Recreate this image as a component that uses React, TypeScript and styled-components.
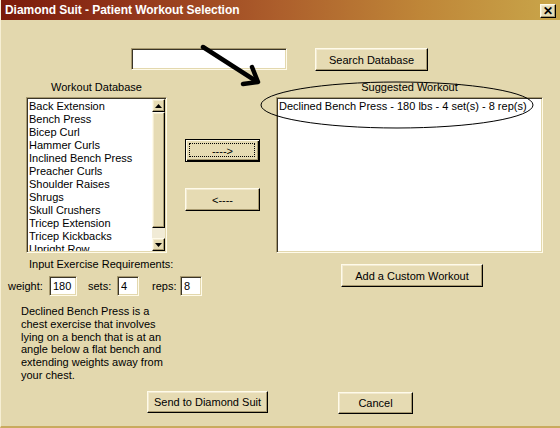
import React from "react";
import styled, { createGlobalStyle, css } from "styled-components";

const Global = createGlobalStyle`
  html, body { margin: 0; padding: 0; background: #e3d8ae; }
  body { font-family: "Liberation Sans", Arial, sans-serif; font-size: 11px; color: #000; }
  * { box-sizing: border-box; }
`;

const raised = css`
  border-top: 1px solid #fffbea;
  border-left: 1px solid #fffbea;
  border-right: 1px solid #000;
  border-bottom: 1px solid #000;
  box-shadow: inset -1px -1px 0 #a89a70, inset 1px 1px 0 #f2ead0;
`;

const sunken = css`
  border-top: 1px solid #a89a70;
  border-left: 1px solid #a89a70;
  border-right: 1px solid #fffbea;
  border-bottom: 1px solid #fffbea;
  box-shadow: inset 1px 1px 0 #3a3528, inset -1px -1px 0 #e3d8ae;
`;

const Window = styled.div`
  position: relative;
  width: 560px;
  height: 428px;
  display: flex;
  flex-direction: column;
  background: #e3d8ae;
  border-left: 1px solid #f6efd4;
  border-bottom: 2px solid #c9aa5e;
  overflow: hidden;
`;

const TitleBar = styled.div`
  height: 20px;
  flex: none;
  display: flex;
  align-items: center;
  justify-content: space-between;
  padding: 0 4px 0 4px;
  background: linear-gradient(to right, #7a1a0b 0%, #92341a 22%, #ad5f2c 50%, #bf8638 75%, #c9a64a 100%);
`;

const TitleText = styled.span`
  color: #fff;
  font-weight: bold;
  font-size: 12px;
  letter-spacing: -0.05px;
`;

const CloseBox = styled.div`
  width: 16px;
  height: 14px;
  margin-top: 1px;
  display: flex;
  align-items: center;
  justify-content: center;
  background: #e6dcb6;
  ${raised};
  font-weight: bold;
  font-size: 12px;
  line-height: 1;
`;

const Body = styled.div`
  flex: 1;
  display: flex;
  flex-direction: column;
`;

const SearchRow = styled.div`
  display: flex;
  align-items: flex-start;
  margin: 28px 0 0 130px;
  gap: 28px;
`;

const TextBox = styled.input<{ $w: number; $h?: number }>`
  width: ${(p) => p.$w}px;
  height: ${(p) => p.$h ?? 20}px;
  background: #fff;
  ${sunken};
  font-family: "Liberation Sans", Arial, sans-serif;
  font-size: 11px;
  padding: 0 3px;
  color: #000;
  outline: none;
  margin: 0;
`;

const Button = styled.button<{ $w: number; $h?: number; $focused?: boolean }>`
  position: relative;
  width: ${(p) => p.$w}px;
  height: ${(p) => p.$h ?? 23}px;
  background: #e6dbb3;
  ${raised};
  font-family: "Liberation Sans", Arial, sans-serif;
  font-size: 11px;
  color: #000;
  padding: 0;
  margin: 0;
  ${(p) =>
    p.$focused &&
    css`
      border: 1px solid #000;
      box-shadow: inset 1px 1px 0 #fffbea, inset -1px -1px 0 #000, inset -2px -2px 0 #a89a70;
      &::after {
        content: "";
        position: absolute;
        inset: 3px 4px 4px 3px;
        border: 1px dotted #000;
      }
    `}
`;

const ListsRow = styled.div`
  display: flex;
  margin-top: 9px;
`;

const ListGroup = styled.div<{ $w: number; $ml: number }>`
  width: ${(p) => p.$w}px;
  margin-left: ${(p) => p.$ml}px;
  display: flex;
  flex-direction: column;
`;

const Caption = styled.div`
  height: 17px;
  line-height: 13px;
  padding-top: 1px;
  text-align: center;
  color: #000;
`;

const ListBox = styled.div`
  height: 156px;
  background: #fff;
  ${sunken};
  display: flex;
  padding: 2px 1px 1px 2px;
  overflow: hidden;
`;

const Items = styled.div`
  flex: 1;
  overflow: hidden;
`;

const Item = styled.div`
  height: 13px;
  line-height: 13px;
  white-space: nowrap;
`;

const ScrollBar = styled.div`
  width: 13px;
  display: flex;
  flex-direction: column;
  margin-top: -1px;
`;

const ScrollBtn = styled.div`
  height: 13px;
  flex: none;
  background: #e6dbb3;
  ${raised};
  display: flex;
  align-items: center;
  justify-content: center;
`;

const Thumb = styled.div`
  height: 116px;
  flex: none;
  background: #e6dbb3;
  ${raised};
`;

const Track = styled.div`
  flex: 1;
  background: #f1ebd6;
`;

const MiddleCol = styled.div`
  margin-left: 18px;
  padding-top: 59px;
  display: flex;
  flex-direction: column;
  gap: 26px;
`;

const LowerRow = styled.div`
  display: flex;
`;

const LowerLeft = styled.div`
  width: 337px;
  padding-left: 7px;
  display: flex;
  flex-direction: column;
`;

const SubCaption = styled.div`
  margin: 5px 0 0 21px;
  line-height: 13px;
`;

const FieldsRow = styled.div`
  display: flex;
  align-items: center;
  margin-top: 5px;
  height: 20px;
`;

const FieldLabel = styled.span<{ $w: number; $ml?: number }>`
  width: ${(p) => p.$w}px;
  margin-left: ${(p) => p.$ml ?? 0}px;
  flex: none;
`;

const Description = styled.div`
  margin: 9px 0 0 13px;
  line-height: 12.8px;
`;

const Line = styled.span`
  display: block;
  white-space: nowrap;
`;

const SendWrap = styled.div`
  margin: 9px 0 0 139px;
`;

const LowerRight = styled.div`
  display: flex;
  flex-direction: column;
  align-items: flex-start;
`;

const AddWrap = styled.div`
  margin: 11px 0 0 3px;
`;

const CancelWrap = styled.div`
  margin-top: 105px;
`;

const Overlay = styled.svg`
  position: absolute;
  left: -1px;
  top: 0;
  width: 560px;
  height: 428px;
  pointer-events: none;
`;

const TriUp = () => (
  <svg width="7" height="4" viewBox="0 0 7 4">
    <path d="M3.5 0 L7 4 L0 4 Z" fill="#000" />
  </svg>
);
const TriDown = () => (
  <svg width="7" height="4" viewBox="0 0 7 4">
    <path d="M0 0 L7 0 L3.5 4 Z" fill="#000" />
  </svg>
);

const exercises = [
  "Back Extension",
  "Bench Press",
  "Bicep Curl",
  "Hammer Curls",
  "Inclined Bench Press",
  "Preacher Curls",
  "Shoulder Raises",
  "Shrugs",
  "Skull Crushers",
  "Tricep Extension",
  "Tricep Kickbacks",
  "Upright Row",
];

export default function App() {
  return (
    <>
      <Global />
      <Window>
        <TitleBar>
          <TitleText>Diamond Suit - Patient Workout Selection</TitleText>
          <CloseBox>✕</CloseBox>
        </TitleBar>
        <Body>
          <SearchRow>
            <TextBox $w={156} $h={22} readOnly value="" />
            <Button $w={113}>Search Database</Button>
          </SearchRow>
          <ListsRow>
            <ListGroup $w={141} $ml={25}>
              <Caption>Workout Database</Caption>
              <ListBox>
                <Items>
                  {exercises.map((e) => (
                    <Item key={e}>{e}</Item>
                  ))}
                </Items>
                <ScrollBar>
                  <ScrollBtn>
                    <TriUp />
                  </ScrollBtn>
                  <Thumb />
                  <Track />
                  <ScrollBtn>
                    <TriDown />
                  </ScrollBtn>
                </ScrollBar>
              </ListBox>
            </ListGroup>
            <MiddleCol>
              <Button $w={75} $focused>
                ----&gt;
              </Button>
              <Button $w={75}>&lt;----</Button>
            </MiddleCol>
            <ListGroup $w={267} $ml={16}>
              <Caption>Suggested Workout</Caption>
              <ListBox>
                <Items>
                  <Item>Declined Bench Press - 180 lbs - 4 set(s) - 8 rep(s)</Item>
                </Items>
              </ListBox>
            </ListGroup>
          </ListsRow>
          <LowerRow>
            <LowerLeft>
              <SubCaption>Input Exercise Requirements:</SubCaption>
              <FieldsRow>
                <FieldLabel $w={41}>weight:</FieldLabel>
                <TextBox $w={28} readOnly value="180" />
                <FieldLabel $w={29} $ml={11}>sets:</FieldLabel>
                <TextBox $w={22} readOnly value="4" />
                <FieldLabel $w={28} $ml={13}>reps:</FieldLabel>
                <TextBox $w={22} readOnly value="8" />
              </FieldsRow>
              <Description>
                <Line>Declined Bench Press is a</Line>
                <Line>chest exercise that involves</Line>
                <Line>lying on a bench that is at an</Line>
                <Line>angle below a flat bench and</Line>
                <Line>extending weights away from</Line>
                <Line>your chest.</Line>
              </Description>
              <SendWrap>
                <Button $w={121} $h={22}>
                  Send to Diamond Suit
                </Button>
              </SendWrap>
            </LowerLeft>
            <LowerRight>
              <AddWrap>
                <Button $w={142}>Add a Custom Workout</Button>
              </AddWrap>
              <CancelWrap>
                <Button $w={75} $h={22}>
                  Cancel
                </Button>
              </CancelWrap>
            </LowerRight>
          </LowerRow>
        </Body>
        <Overlay viewBox="0 0 560 428">
          <ellipse cx="397" cy="105" rx="136" ry="23" fill="none" stroke="#000" strokeWidth="1" />
          <line x1="203" y1="47" x2="256" y2="81" stroke="#000" strokeWidth="4.5" strokeLinecap="round" />
          <polyline
            points="252,67 258,82 243,84"
            fill="none"
            stroke="#000"
            strokeWidth="4.5"
            strokeLinecap="round"
            strokeLinejoin="round"
          />
        </Overlay>
      </Window>
    </>
  );
}
